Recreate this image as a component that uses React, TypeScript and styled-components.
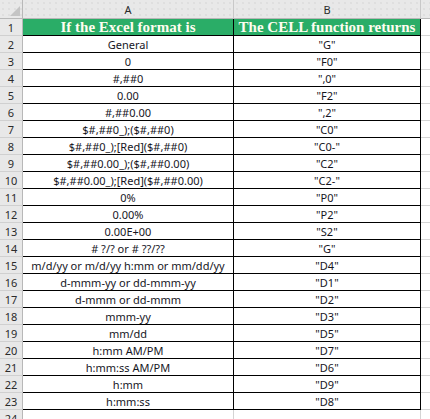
import styled, { createGlobalStyle } from 'styled-components'

const GlobalStyle = createGlobalStyle`
  html, body {
    margin: 0;
    padding: 0;
    background: #ffffff;
    overflow: hidden;
  }
`

const rows: [string, string][] = [
  ['General', '"G"'],
  ['0', '"F0"'],
  ['#,##0', '",0"'],
  ['0.00', '"F2"'],
  ['#,##0.00', '",2"'],
  ['$#,##0_);($#,##0)', '"C0"'],
  ['$#,##0_);[Red]($#,##0)', '"C0-"'],
  ['$#,##0.00_);($#,##0.00)', '"C2"'],
  ['$#,##0.00_);[Red]($#,##0.00)', '"C2-"'],
  ['0%', '"P0"'],
  ['0.00%', '"P2"'],
  ['0.00E+00', '"S2"'],
  ['# ?/? or # ??/??', '"G"'],
  ['m/d/yy or m/d/yy h:mm or mm/dd/yy', '"D4"'],
  ['d-mmm-yy or dd-mmm-yy', '"D1"'],
  ['d-mmm or dd-mmm', '"D2"'],
  ['mmm-yy', '"D3"'],
  ['mm/dd', '"D5"'],
  ['h:mm AM/PM', '"D7"'],
  ['h:mm:ss AM/PM', '"D6"'],
  ['h:mm', '"D9"'],
  ['h:mm:ss', '"D8"'],
]

const Sheet = styled.div`
  display: grid;
  grid-template-columns: 23px 211px 187px 9px;
  grid-template-rows: 19px repeat(24, 17px);
  width: 430px;
  font-family: 'Noto Sans', 'Liberation Sans', sans-serif;
  font-size: 11px;
  color: #16161e;
`

const HeaderCell = styled.div`
  box-sizing: border-box;
  background: #e8e8e8;
  background-image: radial-gradient(#d2d2d2 0.6px, transparent 0.8px);
  background-size: 6px 6px;
  border-right: 1px solid #c8c8c8;
  border-bottom: 1px solid #b8b8b8;
  display: flex;
  align-items: center;
  justify-content: center;
  color: #2b2b2b;
  font-size: 11px;
`

const Corner = styled(HeaderCell)`
  position: relative;
  border-right-color: #b8b8b8;

  &::after {
    content: '';
    position: absolute;
    right: 2px;
    bottom: 2px;
    width: 0;
    height: 0;
    border-left: 10px solid transparent;
    border-bottom: 10px solid #c4c4c4;
  }
`

const RowNum = styled.div`
  box-sizing: border-box;
  background: #e8e8e8;
  border-right: 1px solid #b8b8b8;
  border-bottom: 1px solid #d0d0d0;
  display: flex;
  align-items: center;
  justify-content: center;
  color: #2b2b2b;
  font-size: 11px;
`

const Cell = styled.div<{ $head?: boolean; $empty?: boolean }>`
  box-sizing: border-box;
  display: flex;
  align-items: center;
  justify-content: center;
  white-space: nowrap;
  overflow: hidden;
  background: ${p => (p.$head ? '#2aad67' : '#ffffff')};
  color: ${p => (p.$head ? '#fffdf0' : 'inherit')};
  font-family: ${p =>
    p.$head ? "'Liberation Serif', 'DejaVu Serif', serif" : 'inherit'};
  font-weight: ${p => (p.$head ? 700 : 400)};
  font-size: ${p => (p.$head ? '15px' : '11px')};
  border-right: 1px solid ${p => (p.$empty ? '#d4d4d4' : '#000000')};
  border-bottom: 1px solid ${p => (p.$empty ? '#d4d4d4' : '#000000')};
`

const Filler = styled.div`
  box-sizing: border-box;
  background: #ffffff;
  border-bottom: 1px solid #d4d4d4;
`

const HeadFiller = styled(HeaderCell)`
  border-right: none;
`

const App = () => {
  return (
    <>
      <GlobalStyle />
      <Sheet>
        <Corner />
        <HeaderCell>A</HeaderCell>
        <HeaderCell>B</HeaderCell>
        <HeadFiller />

        <RowNum>1</RowNum>
        <Cell $head>If the Excel format is</Cell>
        <Cell $head>The CELL function returns</Cell>
        <Filler />

        {rows.map(([fmt, ret], i) => (
          <Row key={i} n={i + 2} fmt={fmt} ret={ret} />
        ))}

        <RowNum>24</RowNum>
        <Cell $empty />
        <Cell $empty />
        <Filler />
      </Sheet>
    </>
  )
}

const Row = ({ n, fmt, ret }: { n: number; fmt: string; ret: string }) => (
  <>
    <RowNum>{n}</RowNum>
    <Cell>{fmt}</Cell>
    <Cell>{ret}</Cell>
    <Filler />
  </>
)

export default App
